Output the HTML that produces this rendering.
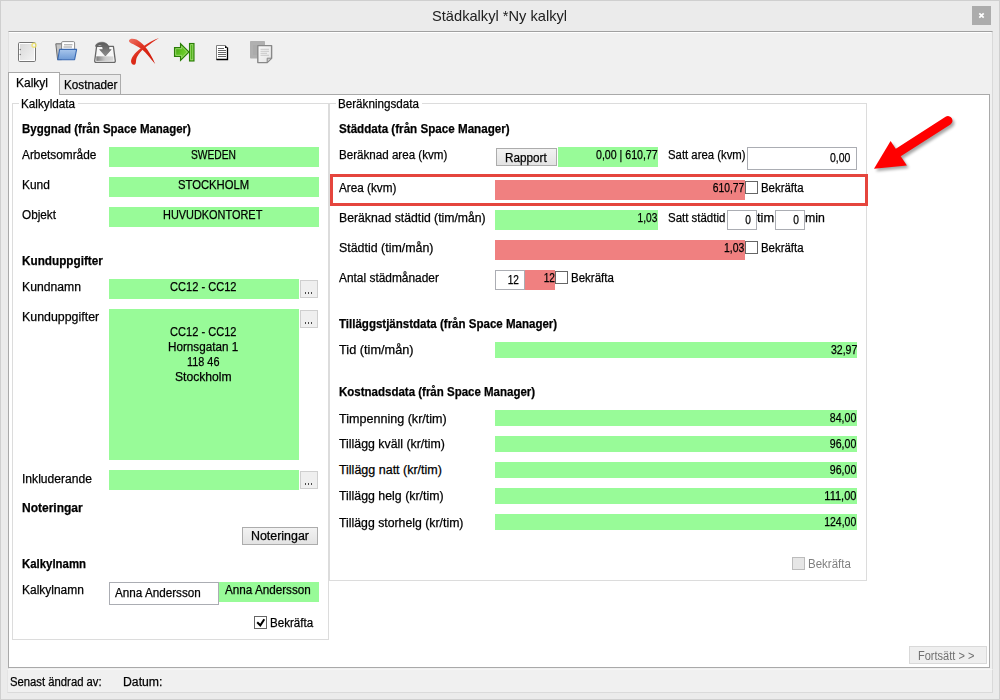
<!DOCTYPE html>
<html><head><meta charset="utf-8"><style>
html,body{margin:0;padding:0;width:1000px;height:700px;overflow:hidden;background:#ebebeb;}
body{position:relative;font-family:"Liberation Sans",sans-serif;}
.b{position:absolute;box-sizing:border-box;}
.t{position:absolute;white-space:nowrap;line-height:1;color:#000;-webkit-text-stroke:0.25px currentColor;}
</style></head><body>
<!-- window frame -->
<div class="b" style="left:0;top:0;width:1000px;height:700px;border:1px solid #cfcfcf;"></div>
<div class="b" style="left:972px;top:6px;width:19px;height:19px;background:#acacac;"></div>
<svg class="b" style="left:972px;top:6px" width="19" height="19"><path d="M7.3 7.3L11.7 11.7M11.7 7.3L7.3 11.7" stroke="#fff" stroke-width="1.7"/></svg>
<!-- client -->
<div class="b" style="left:8px;top:31px;width:985px;height:638px;background:#f0f0f0;border-top:1px solid #a0a0a0;border-left:1px solid #e0e0e0;border-right:1px solid #d9d9d9;"></div>
<div class="b" style="left:9px;top:32px;width:982px;height:1px;background:#fff;"></div>
<!-- tabs -->
<div class="b" style="left:59px;top:74px;width:62px;height:21px;background:#ebebeb;border:1px solid #acacac;border-bottom:none;"></div>
<div class="b" style="left:8px;top:94px;width:982px;height:574px;background:#fff;border:1px solid #a9a9a9;"></div>
<div class="b" style="left:8px;top:72px;width:52px;height:23px;background:#fff;border:1px solid #a9a9a9;border-bottom:none;"></div>
<!-- group boxes -->
<div class="b" style="left:12px;top:103px;width:317px;height:537px;border:1px solid #dcdcdc;"></div>
<div class="b" style="left:19px;top:100px;width:59px;height:8px;background:#fff;"></div>
<div class="b" style="left:329px;top:103px;width:538px;height:478px;border:1px solid #dcdcdc;"></div>
<div class="b" style="left:336px;top:100px;width:86px;height:8px;background:#fff;"></div>
<!-- green fields -->
<div class="b" style="left:109px;top:147px;width:210px;height:20px;background:#98fb98;"></div>
<div class="b" style="left:109px;top:177px;width:210px;height:20px;background:#98fb98;"></div>
<div class="b" style="left:109px;top:207px;width:210px;height:20px;background:#98fb98;"></div>
<div class="b" style="left:109px;top:279px;width:190px;height:20px;background:#98fb98;"></div>
<div class="b" style="left:109px;top:309px;width:190px;height:151px;background:#98fb98;"></div>
<div class="b" style="left:109px;top:470px;width:190px;height:20px;background:#98fb98;"></div>
<div class="b" style="left:219px;top:582px;width:100px;height:20px;background:#98fb98;"></div>
<div class="b" style="left:558px;top:147px;width:100px;height:20px;background:#98fb98;"></div>
<div class="b" style="left:495px;top:210px;width:163px;height:20px;background:#98fb98;"></div>
<div class="b" style="left:495px;top:342px;width:362px;height:16px;background:#98fb98;"></div>
<div class="b" style="left:495px;top:410px;width:362px;height:16px;background:#98fb98;"></div>
<div class="b" style="left:495px;top:436px;width:362px;height:16px;background:#98fb98;"></div>
<div class="b" style="left:495px;top:462px;width:362px;height:16px;background:#98fb98;"></div>
<div class="b" style="left:495px;top:488px;width:362px;height:16px;background:#98fb98;"></div>
<div class="b" style="left:495px;top:514px;width:362px;height:16px;background:#98fb98;"></div>
<!-- red fields -->
<div class="b" style="left:495px;top:180px;width:250px;height:20px;background:#f08080;"></div>
<div class="b" style="left:495px;top:240px;width:250px;height:20px;background:#f08080;"></div>
<div class="b" style="left:525px;top:270px;width:30px;height:20px;background:#f08080;"></div>
<!-- small ... buttons -->
<div class="b" style="left:300px;top:280px;width:18px;height:18px;background:#efefef;border:1px solid #cfcfcf;"></div>
<div class="b" style="left:300px;top:310px;width:18px;height:18px;background:#efefef;border:1px solid #cfcfcf;"></div>
<div class="b" style="left:300px;top:471px;width:18px;height:18px;background:#efefef;border:1px solid #cfcfcf;"></div>
<div class="b" style="left:305px;top:292px;width:1px;height:2px;background:#4a4a4a;box-shadow:3px 0 #4a4a4a,6px 0 #4a4a4a;"></div>
<div class="b" style="left:305px;top:322px;width:1px;height:2px;background:#4a4a4a;box-shadow:3px 0 #4a4a4a,6px 0 #4a4a4a;"></div>
<div class="b" style="left:305px;top:483px;width:1px;height:2px;background:#4a4a4a;box-shadow:3px 0 #4a4a4a,6px 0 #4a4a4a;"></div>
<!-- buttons -->
<div class="b" style="left:242px;top:527px;width:76px;height:18px;background:linear-gradient(#f2f2f2,#e3e3e3);border:1px solid #acacac;"></div>
<div class="b" style="left:496px;top:148px;width:61px;height:18px;background:linear-gradient(#f2f2f2,#e3e3e3);border:1px solid #acacac;"></div>
<div class="b" style="left:909px;top:646px;width:78px;height:18px;background:#efefef;border:1px solid #d9d9d9;"></div>
<!-- inputs -->
<div class="b" style="left:109px;top:582px;width:110px;height:23px;background:#fff;border:1px solid #abadb3;"></div>
<div class="b" style="left:747px;top:147px;width:110px;height:23px;background:#fff;border:1px solid #abadb3;"></div>
<div class="b" style="left:727px;top:210px;width:30px;height:20px;background:#fff;border:1px solid #abadb3;"></div>
<div class="b" style="left:775px;top:210px;width:30px;height:20px;background:#fff;border:1px solid #abadb3;"></div>
<div class="b" style="left:495px;top:270px;width:30px;height:20px;background:#fff;border:1px solid #abadb3;"></div>
<!-- checkboxes -->
<div class="b" style="left:254px;top:616px;width:13px;height:13px;background:#fff;border:1px solid #666;"></div>
<svg class="b" style="left:254px;top:616px" width="13" height="13"><path d="M3.2 6.2L6.3 9.3L10.3 3.2" fill="none" stroke="#000" stroke-width="2"/></svg>
<div class="b" style="left:745px;top:181px;width:13px;height:13px;background:#fff;border:1px solid #666;"></div>
<div class="b" style="left:745px;top:241px;width:13px;height:13px;background:#fff;border:1px solid #666;"></div>
<div class="b" style="left:555px;top:271px;width:13px;height:13px;background:#fff;border:1px solid #666;"></div>
<div class="b" style="left:792px;top:557px;width:13px;height:13px;background:#e6e6e6;border:1px solid #bcbcbc;"></div>
<!-- annotation -->
<div class="b" style="left:330px;top:174px;width:538px;height:32px;border:3px solid #e5453d;"></div>
<svg class="b" style="left:860px;top:100px" width="110" height="90">
<defs><filter id="sh" x="-20%" y="-20%" width="140%" height="140%"><feGaussianBlur stdDeviation="1.5"/></filter></defs>
<g transform="translate(2,2.5)" opacity="0.35" filter="url(#sh)">
<path d="M88 20.6 L37.5 53" stroke="#000" stroke-width="9" stroke-linecap="round"/>
<path d="M14 68.8 L30.6 41.1 L46.9 65.6 Z" fill="#000"/>
</g>
<path d="M88 20.6 L37.5 53" stroke="#f00" stroke-width="9" stroke-linecap="round"/>
<path d="M14 68.8 L30.6 41.1 L46.9 65.6 Z" fill="#f00"/>
</svg>
<!-- status bar -->
<div class="b" style="left:7px;top:669px;width:986px;height:24px;background:#f0f0f0;border-top:1px solid #f6f6f6;border-left:1px solid #e4e4e4;border-right:1px solid #d9d9d9;border-bottom:1px solid #dadada;"></div>
<svg class="b" style="left:0;top:0" width="300" height="70" viewBox="0 0 300 70">
<defs>
<linearGradient id="gNew" x1="0" y1="0" x2="1" y2="1"><stop offset="0" stop-color="#d9d9d9"/><stop offset="1" stop-color="#f3f3f3"/></linearGradient>
<linearGradient id="gBlue" x1="0" y1="0" x2="0" y2="1"><stop offset="0" stop-color="#a8c6ec"/><stop offset="1" stop-color="#6f9bd6"/></linearGradient>
<linearGradient id="gArr" x1="0" y1="0" x2="0" y2="1"><stop offset="0" stop-color="#5a5a5a"/><stop offset="1" stop-color="#8c8c8c"/></linearGradient>
<linearGradient id="gRed" x1="0" y1="0" x2="1" y2="1"><stop offset="0" stop-color="#ee7466"/><stop offset="0.45" stop-color="#dc2a18"/><stop offset="1" stop-color="#cf1a0a"/></linearGradient>
<linearGradient id="gGreen" x1="0" y1="0" x2="1" y2="0.6"><stop offset="0" stop-color="#3c9a0e"/><stop offset="0.6" stop-color="#62c424"/><stop offset="1" stop-color="#7ad43a"/></linearGradient>
<linearGradient id="gPage" x1="0" y1="0" x2="1" y2="1"><stop offset="0" stop-color="#fafafa"/><stop offset="1" stop-color="#e4e4e4"/></linearGradient>
<linearGradient id="gBar" x1="0" y1="0" x2="1" y2="0"><stop offset="0" stop-color="#7d7d7d"/><stop offset="0.55" stop-color="#cfcfcf"/><stop offset="1" stop-color="#e6e6e6"/></linearGradient>
</defs>
<!-- new -->
<g transform="translate(18,42)">
<rect x="0.5" y="0.5" width="17" height="19" rx="1.2" fill="#fff" stroke="#767676"/>
<rect x="2" y="2" width="14" height="16" fill="url(#gNew)"/>
<circle cx="2.3" cy="7.5" r="0.8" fill="#808080"/><circle cx="2.3" cy="12.5" r="0.8" fill="#808080"/>
<circle cx="16" cy="3.2" r="2" fill="#f4f4ff" stroke="#efe46a" stroke-width="1.5" opacity="0.85"/>
</g>
<!-- open -->
<g transform="translate(55,41)">
<path d="M0.8 2.8 L6.5 2.8 L6.5 18.6 L2.6 18.6 Z" fill="#c4c4c4" stroke="#6a6a6a" stroke-width="1"/>
<rect x="6.6" y="0.6" width="13" height="9.5" rx="1.2" fill="#fff" stroke="#8a8a8a"/>
<path d="M9 3.8 H17.5 M8.5 6 H17" stroke="#8f8f8f" stroke-width="0.9"/>
<path d="M4.6 8.4 L21.6 8.4 L19.6 18.7 L2.8 18.7 Z" fill="url(#gBlue)" stroke="#3a6ab2" stroke-width="1.1" stroke-linejoin="round"/>
</g>
<!-- save -->
<g transform="translate(94,41)">
<path d="M2.6 5.3 L19.4 5.3 L21.3 19.8 Q21.4 21.4 19.8 21.4 L2.2 21.4 Q0.6 21.4 0.7 19.8 Z" fill="#f7f7f7" stroke="#686868" stroke-width="1.3" stroke-linejoin="round"/>
<rect x="2.3" y="15.3" width="17.4" height="4.6" fill="url(#gBar)"/>
<path d="M12 15.8 V19.5 M14 15.8 V19.5 M16 15.8 V19.5 M18 15.8 V19.5" stroke="#c8c8c8" stroke-width="0.8"/>
<path d="M1.5 4.6 C 2.5 0.3, 13.5 -0.8, 15 6.2 L15 8.6 L17.2 8.6 L11.4 15 L5.6 8.6 L8.8 8.6 L8.8 7.2 C 8.4 3.6, 4.6 3.2, 3.6 5.4 C 3 6.5, 1.3 6.2, 1.5 4.6 Z" fill="url(#gArr)" stroke="#5a5a5a" stroke-width="0.5"/>
</g>
<!-- red x -->
<g transform="translate(128,37)">
<path d="M1 3.6 C 1.6 1.4, 5 1.2, 8.5 2.6 C 11 3.8, 14 6.5, 16.5 9 C 20.5 13.5, 24.5 20.5, 27.2 27 C 22.5 21.5, 18.5 16, 13.5 12 C 10 9.5, 6 7.5, 3 6.2 C 1.6 5.6, 0.9 4.8, 1 3.6 Z" fill="url(#gRed)"/>
<path d="M31 1 C 26 2.5, 20 6, 15 9.5 C 9 14, 3.5 19, 3 24 C 3 27, 5 28.5, 7 27.5 C 8.5 26.5, 7.5 23, 9 20 C 11 16, 15 12, 18 10 C 22 7, 27 3.5, 31 1 Z" fill="url(#gRed)"/>
</g>
<!-- green arrow -->
<g transform="translate(174,43)">
<path d="M0.5 4.5 L6.5 4.5 L6.5 0.5 L15 9 L6.5 17.5 L6.5 13.5 L0.5 13.5 Z" fill="url(#gGreen)" stroke="#2a7c08" stroke-width="1.1" stroke-linejoin="miter"/>
<path d="M1.7 5.7 L7.7 5.7 L7.7 3.3 L13.3 9 L7.7 14.7 L7.7 12.3 L1.7 12.3 Z" fill="none" stroke="#a6dc7c" stroke-width="0.8"/>
<rect x="15.5" y="0.5" width="4.5" height="17.5" fill="#52b818" stroke="#2a7c08" stroke-width="1.1"/>
<rect x="16.7" y="1.7" width="2.1" height="15.1" fill="#4aae12" stroke="#a6dc7c" stroke-width="0.8"/>
</g>
<!-- document -->
<g transform="translate(216,45)">
<path d="M0.5 0.5 H9.3 L11.5 2.7 V14.5 H0.5 Z" fill="#fff" stroke="#808080"/>
<path d="M11.5 2.5 V14.5 H0.5" fill="none" stroke="#000" stroke-width="1.3"/>
<path d="M9 0.6 L11.4 3 L9 3 Z" fill="#000"/>
<path d="M2 3.5 H8 M2 5.5 H10 M2 7.5 H10 M2 9.5 H10 M2 11.5 H10" stroke="#555" stroke-width="0.9"/>
</g>
<!-- copy -->
<g transform="translate(250,41)">
<rect x="0" y="0" width="15" height="17.5" rx="0.8" fill="#b0b0b0"/>
<path d="M3 5 H7 M3 7 H7 M3 9 H7 M3 11 H7 M3 13 H7" stroke="#a4a4a4" stroke-width="0.8"/>
<path d="M7.8 4.6 H21.6 V17.2 L17.2 21.6 H7.8 Z" fill="url(#gPage)" stroke="#888" stroke-width="1.4" stroke-linejoin="round"/>
<path d="M21.6 17.2 H17.2 V21.6 Z" fill="#cdcdcd" stroke="#888" stroke-width="1"/>
<path d="M10.5 8.3 H19 M10.5 10.3 H19 M10.5 12.3 H17 M10.5 14.3 H19" stroke="#c4c4c4" stroke-width="0.9"/>
</g>
</svg>

<div class="t" style="left:432.20px;top:8.30px;font-size:15px;transform:scaleX(0.9765);transform-origin:left;-webkit-text-stroke:0;color:#202020;">Städkalkyl *Ny kalkyl</div>
<div class="t" style="left:15.75px;top:77.42px;font-size:12.5px;transform:scaleX(0.9599);transform-origin:left;">Kalkyl</div>
<div class="t" style="left:63.90px;top:79.42px;font-size:12.5px;transform:scaleX(0.9387);transform-origin:left;">Kostnader</div>
<div class="t" style="left:20.75px;top:98.42px;font-size:12.5px;transform:scaleX(0.9388);transform-origin:left;">Kalkyldata</div>
<div class="t" style="left:338.25px;top:98.42px;font-size:12.5px;transform:scaleX(0.9312);transform-origin:left;">Beräkningsdata</div>
<div class="t" style="left:22.00px;top:123.42px;font-size:12.5px;transform:scaleX(0.9176);transform-origin:left;font-weight:bold;">Byggnad (från Space Manager)</div>
<div class="t" style="left:22.10px;top:149.42px;font-size:12.5px;transform:scaleX(0.9471);transform-origin:left;">Arbetsområde</div>
<div class="t" style="left:190.50px;top:149.42px;font-size:12.5px;transform:scaleX(0.8206);transform-origin:left;">SWEDEN</div>
<div class="t" style="left:22.00px;top:179.42px;font-size:12.5px;transform:scaleX(0.9560);transform-origin:left;">Kund</div>
<div class="t" style="left:178.25px;top:179.42px;font-size:12.5px;transform:scaleX(0.9009);transform-origin:left;">STOCKHOLM</div>
<div class="t" style="left:22.00px;top:209.42px;font-size:12.5px;transform:scaleX(0.9412);transform-origin:left;">Objekt</div>
<div class="t" style="left:163.25px;top:209.42px;font-size:12.5px;transform:scaleX(0.8737);transform-origin:left;">HUVUDKONTORET</div>
<div class="t" style="left:22.00px;top:255.42px;font-size:12.5px;transform:scaleX(0.9394);transform-origin:left;font-weight:bold;">Kunduppgifter</div>
<div class="t" style="left:22.00px;top:280.92px;font-size:12.5px;transform:scaleX(0.9746);transform-origin:left;">Kundnamn</div>
<div class="t" style="left:170.00px;top:280.92px;font-size:12.5px;transform:scaleX(0.8858);transform-origin:left;">CC12 - CC12</div>
<div class="t" style="left:22.00px;top:311.42px;font-size:12.5px;transform:scaleX(0.9912);transform-origin:left;">Kunduppgifter</div>
<div class="t" style="left:170.00px;top:326.42px;font-size:12.5px;transform:scaleX(0.8858);transform-origin:left;">CC12 - CC12</div>
<div class="t" style="left:168.25px;top:341.42px;font-size:12.5px;transform:scaleX(0.9346);transform-origin:left;">Hornsgatan 1</div>
<div class="t" style="left:187.00px;top:356.42px;font-size:12.5px;transform:scaleX(0.8701);transform-origin:left;">118 46</div>
<div class="t" style="left:174.50px;top:371.42px;font-size:12.5px;transform:scaleX(0.9708);transform-origin:left;">Stockholm</div>
<div class="t" style="left:21.50px;top:472.82px;font-size:12.5px;transform:scaleX(0.9674);transform-origin:left;">Inkluderande</div>
<div class="t" style="left:21.50px;top:501.62px;font-size:12.5px;transform:scaleX(0.9599);transform-origin:left;font-weight:bold;">Noteringar</div>
<div class="t" style="left:250.50px;top:530.42px;font-size:12.5px;transform:scaleX(0.9930);transform-origin:left;">Noteringar</div>
<div class="t" style="left:21.50px;top:557.62px;font-size:12.5px;transform:scaleX(0.9118);transform-origin:left;font-weight:bold;">Kalkylnamn</div>
<div class="t" style="left:21.50px;top:583.82px;font-size:12.5px;transform:scaleX(0.9582);transform-origin:left;">Kalkylnamn</div>
<div class="t" style="left:114.70px;top:587.02px;font-size:12.5px;transform:scaleX(0.9343);transform-origin:left;">Anna Andersson</div>
<div class="t" style="left:224.70px;top:583.82px;font-size:12.5px;transform:scaleX(0.9343);transform-origin:left;">Anna Andersson</div>
<div class="t" style="left:269.90px;top:617.42px;font-size:12.5px;transform:scaleX(0.9254);transform-origin:left;">Bekräfta</div>
<div class="t" style="left:9.90px;top:676.02px;font-size:12.5px;transform:scaleX(0.9031);transform-origin:left;">Senast ändrad av:</div>
<div class="t" style="left:123.10px;top:676.02px;font-size:12.5px;transform:scaleX(0.9790);transform-origin:left;">Datum:</div>
<div class="t" style="left:338.50px;top:123.42px;font-size:12.5px;transform:scaleX(0.9306);transform-origin:left;font-weight:bold;">Städdata (från Space Manager)</div>
<div class="t" style="left:338.50px;top:149.42px;font-size:12.5px;transform:scaleX(0.9282);transform-origin:left;">Beräknad area (kvm)</div>
<div class="t" style="left:505.00px;top:152.42px;font-size:12.5px;transform:scaleX(0.9376);transform-origin:left;">Rapport</div>
<div class="t" style="right:342.60px;top:149.42px;font-size:12.5px;transform:scaleX(0.8489);transform-origin:right;">0,00 | 610,77</div>
<div class="t" style="left:668.10px;top:149.42px;font-size:12.5px;transform:scaleX(0.9077);transform-origin:left;">Satt area (kvm)</div>
<div class="t" style="right:149.30px;top:151.82px;font-size:12.5px;transform:scaleX(0.8369);transform-origin:right;">0,00</div>
<div class="t" style="left:338.50px;top:182.42px;font-size:12.5px;transform:scaleX(0.9393);transform-origin:left;">Area (kvm)</div>
<div class="t" style="right:255.60px;top:182.02px;font-size:12.5px;transform:scaleX(0.8255);transform-origin:right;">610,77</div>
<div class="t" style="left:760.90px;top:182.42px;font-size:12.5px;transform:scaleX(0.9145);transform-origin:left;">Bekräfta</div>
<div class="t" style="left:338.50px;top:212.42px;font-size:12.5px;transform:scaleX(0.9772);transform-origin:left;">Beräknad städtid (tim/mån)</div>
<div class="t" style="right:342.60px;top:212.42px;font-size:12.5px;transform:scaleX(0.8123);transform-origin:right;">1,03</div>
<div class="t" style="left:668.10px;top:212.42px;font-size:12.5px;transform:scaleX(0.9172);transform-origin:left;">Satt städtid</div>
<div class="t" style="right:248.80px;top:214.02px;font-size:12.5px;transform:scaleX(0.8143);transform-origin:right;">0</div>
<div class="t" style="left:757.00px;top:212.42px;font-size:12.5px;transform:scaleX(1.0277);transform-origin:left;">tim</div>
<div class="t" style="right:201.20px;top:214.02px;font-size:12.5px;transform:scaleX(0.8143);transform-origin:right;">0</div>
<div class="t" style="left:805.20px;top:212.42px;font-size:12.5px;transform:scaleX(0.9857);transform-origin:left;">min</div>
<div class="t" style="left:338.50px;top:242.42px;font-size:12.5px;transform:scaleX(0.9921);transform-origin:left;">Städtid (tim/mån)</div>
<div class="t" style="right:255.60px;top:242.42px;font-size:12.5px;transform:scaleX(0.8328);transform-origin:right;">1,03</div>
<div class="t" style="left:760.90px;top:242.42px;font-size:12.5px;transform:scaleX(0.9145);transform-origin:left;">Bekräfta</div>
<div class="t" style="left:338.50px;top:272.42px;font-size:12.5px;transform:scaleX(0.9521);transform-origin:left;">Antal städmånader</div>
<div class="t" style="right:481.25px;top:274.17px;font-size:12.5px;transform:scaleX(0.8063);transform-origin:right;">12</div>
<div class="t" style="right:445.00px;top:272.42px;font-size:12.5px;transform:scaleX(0.8063);transform-origin:right;">12</div>
<div class="t" style="left:571.00px;top:272.42px;font-size:12.5px;transform:scaleX(0.9211);transform-origin:left;">Bekräfta</div>
<div class="t" style="left:338.50px;top:318.42px;font-size:12.5px;transform:scaleX(0.9219);transform-origin:left;font-weight:bold;">Tilläggstjänstdata (från Space Manager)</div>
<div class="t" style="left:339.00px;top:344.42px;font-size:12.5px;transform:scaleX(1.0193);transform-origin:left;">Tid (tim/mån)</div>
<div class="t" style="right:143.20px;top:344.42px;font-size:12.5px;transform:scaleX(0.8427);transform-origin:right;">32,97</div>
<div class="t" style="left:338.50px;top:385.92px;font-size:12.5px;transform:scaleX(0.9198);transform-origin:left;font-weight:bold;">Kostnadsdata (från Space Manager)</div>
<div class="t" style="left:338.90px;top:412.72px;font-size:12.5px;transform:scaleX(1.0053);transform-origin:left;">Timpenning (kr/tim)</div>
<div class="t" style="right:143.40px;top:412.12px;font-size:12.5px;transform:scaleX(0.8459);transform-origin:right;">84,00</div>
<div class="t" style="left:338.90px;top:438.42px;font-size:12.5px;transform:scaleX(0.9867);transform-origin:left;">Tillägg kväll (kr/tim)</div>
<div class="t" style="right:143.40px;top:437.92px;font-size:12.5px;transform:scaleX(0.8459);transform-origin:right;">96,00</div>
<div class="t" style="left:338.90px;top:464.42px;font-size:12.5px;">Tillägg natt (kr/tim)</div>
<div class="t" style="right:143.40px;top:463.92px;font-size:12.5px;transform:scaleX(0.8459);transform-origin:right;">96,00</div>
<div class="t" style="left:338.90px;top:490.42px;font-size:12.5px;transform:scaleX(0.9882);transform-origin:left;">Tillägg helg (kr/tim)</div>
<div class="t" style="right:143.40px;top:490.12px;font-size:12.5px;transform:scaleX(0.8813);transform-origin:right;">111,00</div>
<div class="t" style="left:338.90px;top:516.72px;font-size:12.5px;transform:scaleX(0.9827);transform-origin:left;">Tillägg storhelg (kr/tim)</div>
<div class="t" style="right:143.40px;top:516.12px;font-size:12.5px;transform:scaleX(0.8385);transform-origin:right;">124,00</div>
<div class="t" style="left:808.10px;top:557.72px;font-size:12.5px;transform:scaleX(0.9211);transform-origin:left;-webkit-text-stroke:0;color:#808080;">Bekräfta</div>
<div class="t" style="left:918.10px;top:650.12px;font-size:12.5px;transform:scaleX(0.8816);transform-origin:left;-webkit-text-stroke:0;color:#707070;">Fortsätt &gt; &gt;</div>
</body></html>
